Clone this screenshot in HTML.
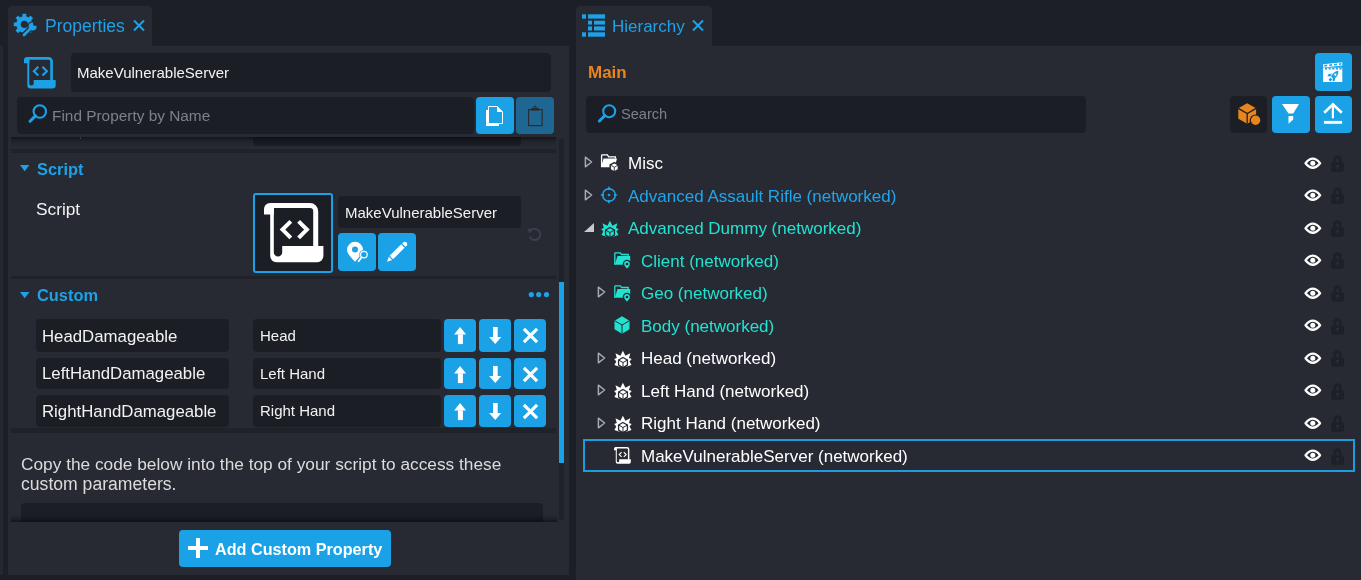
<!DOCTYPE html>
<html><head><meta charset="utf-8">
<style>
*{margin:0;padding:0;box-sizing:border-box}
html,body{width:1361px;height:580px;overflow:hidden;background:#1c1f26;font-family:"Liberation Sans",sans-serif}
.a{position:absolute}
.t{position:absolute;white-space:nowrap;line-height:1;will-change:transform}
svg{overflow:visible}
</style></head><body>
<div class="a" style="left:0px;top:46px;width:3px;height:529px;background:#262830;"></div>
<div class="a" style="left:8px;top:6px;width:144px;height:41px;background:#272a33;border-radius:4px 4px 0 0;"></div>
<div class="a" style="left:8px;top:46px;width:561px;height:529px;background:#272a33;"></div>
<svg class="a" style="left:11px;top:11px" width="30" height="30" viewBox="0 0 30 30">
<g fill="#1ea1e6" transform="translate(13.35 13.35)">
 <circle r="8.2"/>
 <rect x="-1.9" y="-10.6" width="3.8" height="4" rx="0.6" transform="rotate(0)"/><rect x="-1.9" y="-10.6" width="3.8" height="4" rx="0.6" transform="rotate(45)"/><rect x="-1.9" y="-10.6" width="3.8" height="4" rx="0.6" transform="rotate(90)"/><rect x="-1.9" y="-10.6" width="3.8" height="4" rx="0.6" transform="rotate(135)"/><rect x="-1.9" y="-10.6" width="3.8" height="4" rx="0.6" transform="rotate(180)"/><rect x="-1.9" y="-10.6" width="3.8" height="4" rx="0.6" transform="rotate(225)"/><rect x="-1.9" y="-10.6" width="3.8" height="4" rx="0.6" transform="rotate(270)"/><rect x="-1.9" y="-10.6" width="3.8" height="4" rx="0.6" transform="rotate(315)"/>
</g>
<circle cx="13.35" cy="13.35" r="3.6" fill="#272a33"/>
<path d="M13 24L20.5 16.5" stroke="#272a33" stroke-width="5.4" stroke-linecap="round"/>
<circle cx="21.6" cy="15.4" r="5.3" fill="#272a33"/>
<path d="M13 24L20.5 16.5" stroke="#1ea1e6" stroke-width="2.8" stroke-linecap="round"/>
<circle cx="21.6" cy="15.4" r="4" fill="#1ea1e6"/>
<circle cx="24.5" cy="12.5" r="2.5" fill="#272a33"/>
</svg>
<div class="t" style="left:45px;top:18px;font-size:17.5px;color:#1ea1e6;">Properties</div>
<svg class="a" style="left:133px;top:20px" width="12" height="11" viewBox="0 0 12 11"><path d="M1 0.5L11 10.5M11 0.5L1 10.5" stroke="#1ea1e6" stroke-width="2"/></svg>
<div class="a" style="left:11px;top:137px;width:546px;height:385px;overflow:hidden">
<div class="a" style="left:-11px;top:-137px;width:1361px;height:580px">
<div class="a" style="left:253px;top:110px;width:268px;height:36px;background:#1c1e26;border-radius:4px;"></div>
<div class="a" style="left:80px;top:136px;width:1px;height:3px;background:#6a6d75;"></div>
<div class="a" style="left:11px;top:149px;width:545px;height:4px;background:#1f2229;"></div>
<svg class="a" style="left:19px;top:164px" width="12" height="8" viewBox="0 0 12 8"><path d="M1 1H10.4L5.7 7.3Z" fill="#1ea1e6"/></svg>
<div class="t" style="left:37px;top:161px;font-size:16.4px;color:#1ea1e6;font-weight:bold;">Script</div>
<div class="t" style="left:36px;top:201px;font-size:17.3px;color:#f2f2f2;">Script</div>
<div class="a" style="left:253px;top:193px;width:80px;height:80px;background:#1c1e26;border-radius:3px;border:2px solid #1aa1e6;"></div>
<svg class="a" style="left:263.8px;top:203.4px;color:#ffffff" width="60" height="60" viewBox="0 0 60 60"><path d="M0 6A6 6 0 0 1 6 0H10V11.5H0Z" fill="currentColor"/>
 <path d="M6 2.5H46A5.7 5.7 0 0 1 51.7 8.2V44" fill="none" stroke="currentColor" stroke-width="5"/>
 <path d="M6.2 4V53A6.2 6.2 0 0 0 12.4 59.2H53.2A6.2 6.2 0 0 0 59.4 53V43H18.2V49.4A4.2 4.2 0 0 1 9.8 49.4V4Z" fill="currentColor"/>
 <path d="M26.8 18.3L18.5 26.6L26.8 34.9M34.6 18.3L42.9 26.6L34.6 34.9" fill="none" stroke="currentColor" stroke-width="4"/></svg>
<div class="a" style="left:338px;top:196px;width:183px;height:32px;background:#1c1e26;border-radius:4px;"></div>
<div class="t" style="left:344.5px;top:204.5px;font-size:15px;color:#f2f2f2;">MakeVulnerableServer</div>
<div class="a" style="left:338px;top:233px;width:38px;height:38px;background:#1aa1e6;border-radius:4px;"></div>
<svg class="a" style="left:338px;top:233px" width="38" height="38" viewBox="0 0 38 38">
<path d="M17 28.8C13.2 24.2 9 20.8 9 16.8A8 8 0 0 1 25 16.8C25 20.8 20.8 24.2 17 28.8Z" fill="#fff"/>
<circle cx="17" cy="16.6" r="3" fill="#1aa1e6"/>
<circle cx="25.9" cy="21.6" r="4.6" fill="#1aa1e6"/>
<path d="M23.6 24.2L20.6 28.3" stroke="#1aa1e6" stroke-width="3.6" stroke-linecap="round"/>
<circle cx="25.9" cy="21.6" r="3.3" fill="none" stroke="#fff" stroke-width="1.2"/>
<path d="M23.6 24.2L20.6 28.3" stroke="#fff" stroke-width="1.9" stroke-linecap="round"/>
</svg>
<div class="a" style="left:378px;top:233px;width:38px;height:38px;background:#1aa1e6;border-radius:4px;"></div>
<svg class="a" style="left:378px;top:233px" width="38" height="38" viewBox="0 0 38 38">
<path d="M9.1 28.8L14.19 27.1L10.8 23.71Z" fill="#fff"/>
<path d="M15.04 26.25L26.57 14.73L23.17 11.33L11.65 22.86Z" fill="#fff"/>
<path d="M27.48 13.81L28.9 12.4Q29.8 10.9 28.6 9.6Q27.3 8.4 25.7 9.1L24.09 10.42Z" fill="#fff"/>
</svg>
<svg class="a" style="left:527px;top:227px" width="16" height="14" viewBox="0 0 16 14">
<path d="M3.2 4.2A5.6 5.6 0 1 1 2.6 9.6" fill="none" stroke="#3c404b" stroke-width="1.9"/>
<path d="M0.8 1.2L6.2 2.2L2 6.6Z" fill="#3c404b"/>
</svg>
<div class="a" style="left:11px;top:276px;width:545px;height:3px;background:#1f2229;"></div>
<svg class="a" style="left:19px;top:291px" width="12" height="8" viewBox="0 0 12 8"><path d="M1 1H10.4L5.7 7.3Z" fill="#1ea1e6"/></svg>
<div class="t" style="left:37px;top:287px;font-size:16.4px;color:#1ea1e6;font-weight:bold;">Custom</div>
<svg class="a" style="left:527px;top:290px" width="24" height="10" viewBox="0 0 24 10"><circle cx="4.3" cy="4.6" r="2.6" fill="#1ea1e6"/><circle cx="11.7" cy="4.6" r="2.6" fill="#1ea1e6"/><circle cx="19.5" cy="4.6" r="2.6" fill="#1ea1e6"/></svg>
<div class="a" style="left:36px;top:319px;width:193px;height:32.5px;background:#1c1e26;border-radius:4px;"></div>
<div class="t" style="left:42px;top:329.2px;font-size:16.8px;color:#f2f2f2;">HeadDamageable</div>
<div class="a" style="left:253px;top:319px;width:188px;height:32.5px;background:#1c1e26;border-radius:4px;"></div>
<div class="t" style="left:260px;top:328.2px;font-size:15px;color:#f2f2f2;">Head</div>
<div class="a" style="left:444px;top:319px;width:32px;height:32.5px;background:#1aa1e6;border-radius:4px;"></div>
<svg class="a" style="left:444px;top:319px" width="32" height="33" viewBox="0 0 32 33"><path d="M16.1 8.1L22.1 15.5H10.1Z" fill="#fff"/><path d="M13.9 15.3H18.9V25.1H13.9Z" fill="#fff"/></svg>
<div class="a" style="left:479px;top:319px;width:32px;height:32.5px;background:#1aa1e6;border-radius:4px;"></div>
<svg class="a" style="left:479px;top:319px" width="32" height="33" viewBox="0 0 32 33"><path d="M14 8H18.7V18.3H14Z" fill="#fff"/><path d="M10.1 18.1H22.3L16.3 24.9Z" fill="#fff"/></svg>
<div class="a" style="left:514px;top:319px;width:32px;height:32.5px;background:#1aa1e6;border-radius:4px;"></div>
<svg class="a" style="left:514px;top:319px" width="32" height="33" viewBox="0 0 32 33"><path d="M9.9 9.9L23.1 23.1M23.1 9.9L9.9 23.1" stroke="#fff" stroke-width="3.2"/></svg>
<div class="a" style="left:36px;top:357.5px;width:193px;height:31.3px;background:#1c1e26;border-radius:4px;"></div>
<div class="t" style="left:42px;top:366.2px;font-size:16.8px;color:#f2f2f2;">LeftHandDamageable</div>
<div class="a" style="left:253px;top:357.5px;width:188px;height:31.3px;background:#1c1e26;border-radius:4px;"></div>
<div class="t" style="left:260px;top:365.5px;font-size:15px;color:#f2f2f2;">Left Hand</div>
<div class="a" style="left:444px;top:357.5px;width:32px;height:31.3px;background:#1aa1e6;border-radius:4px;"></div>
<svg class="a" style="left:444px;top:357.5px" width="32" height="33" viewBox="0 0 32 33"><path d="M16.1 8.1L22.1 15.5H10.1Z" fill="#fff"/><path d="M13.9 15.3H18.9V25.1H13.9Z" fill="#fff"/></svg>
<div class="a" style="left:479px;top:357.5px;width:32px;height:31.3px;background:#1aa1e6;border-radius:4px;"></div>
<svg class="a" style="left:479px;top:357.5px" width="32" height="33" viewBox="0 0 32 33"><path d="M14 8H18.7V18.3H14Z" fill="#fff"/><path d="M10.1 18.1H22.3L16.3 24.9Z" fill="#fff"/></svg>
<div class="a" style="left:514px;top:357.5px;width:32px;height:31.3px;background:#1aa1e6;border-radius:4px;"></div>
<svg class="a" style="left:514px;top:357.5px" width="32" height="33" viewBox="0 0 32 33"><path d="M9.9 9.9L23.1 23.1M23.1 9.9L9.9 23.1" stroke="#fff" stroke-width="3.2"/></svg>
<div class="a" style="left:36px;top:394.5px;width:193px;height:32px;background:#1c1e26;border-radius:4px;"></div>
<div class="t" style="left:42px;top:404.2px;font-size:16.8px;color:#f2f2f2;">RightHandDamageable</div>
<div class="a" style="left:253px;top:394.5px;width:188px;height:32px;background:#1c1e26;border-radius:4px;"></div>
<div class="t" style="left:260px;top:403px;font-size:15px;color:#f2f2f2;">Right Hand</div>
<div class="a" style="left:444px;top:394.5px;width:32px;height:32px;background:#1aa1e6;border-radius:4px;"></div>
<svg class="a" style="left:444px;top:394.5px" width="32" height="33" viewBox="0 0 32 33"><path d="M16.1 8.1L22.1 15.5H10.1Z" fill="#fff"/><path d="M13.9 15.3H18.9V25.1H13.9Z" fill="#fff"/></svg>
<div class="a" style="left:479px;top:394.5px;width:32px;height:32px;background:#1aa1e6;border-radius:4px;"></div>
<svg class="a" style="left:479px;top:394.5px" width="32" height="33" viewBox="0 0 32 33"><path d="M14 8H18.7V18.3H14Z" fill="#fff"/><path d="M10.1 18.1H22.3L16.3 24.9Z" fill="#fff"/></svg>
<div class="a" style="left:514px;top:394.5px;width:32px;height:32px;background:#1aa1e6;border-radius:4px;"></div>
<svg class="a" style="left:514px;top:394.5px" width="32" height="33" viewBox="0 0 32 33"><path d="M9.9 9.9L23.1 23.1M23.1 9.9L9.9 23.1" stroke="#fff" stroke-width="3.2"/></svg>
<div class="a" style="left:11px;top:428px;width:545px;height:5px;background:#1f2229;"></div>
<div class="t" style="left:21px;top:456px;font-size:17.3px;color:#dcdcdc;">Copy the code below into the top of your script to access these</div>
<div class="t" style="left:21px;top:476px;font-size:17.6px;color:#dcdcdc;">custom parameters.</div>
<div class="a" style="left:21px;top:503px;width:522px;height:60px;background:#1c1e26;border-radius:4px;"></div>
</div>
<div class="a" style="left:0;top:377px;width:546px;height:8px;background:linear-gradient(to bottom,rgba(0,0,0,0),rgba(0,0,0,.2) 60%,rgba(0,0,0,.5))"></div>
</div>
<div class="a" style="left:8px;top:46px;width:548px;height:91px;background:#272a33;"></div>
<div class="a" style="left:11px;top:137px;width:545px;height:10px;background:linear-gradient(to bottom,rgba(0,0,0,.5),rgba(0,0,0,.18) 40%,rgba(0,0,0,0))"></div>
<svg class="a" style="left:24px;top:56.6px;color:#1aa1e6" width="32" height="32" viewBox="0 0 60 60"><path d="M0 6A6 6 0 0 1 6 0H10V11.5H0Z" fill="currentColor"/>
 <path d="M6 2.5H46A5.7 5.7 0 0 1 51.7 8.2V44" fill="none" stroke="currentColor" stroke-width="5"/>
 <path d="M6.2 4V53A6.2 6.2 0 0 0 12.4 59.2H53.2A6.2 6.2 0 0 0 59.4 53V43H18.2V49.4A4.2 4.2 0 0 1 9.8 49.4V4Z" fill="currentColor"/>
 <path d="M26.8 18.3L18.5 26.6L26.8 34.9M34.6 18.3L42.9 26.6L34.6 34.9" fill="none" stroke="currentColor" stroke-width="4"/></svg>
<div class="a" style="left:71px;top:53px;width:480px;height:39px;background:#1c1e26;border-radius:4px;"></div>
<div class="t" style="left:77px;top:65px;font-size:15px;color:#f2f2f2;">MakeVulnerableServer</div>
<div class="a" style="left:17px;top:97px;width:457px;height:37px;background:#1c1e26;border-radius:4px;"></div>
<svg class="a" style="left:27px;top:103px" width="22" height="22" viewBox="0 0 22 22"><circle cx="12.8" cy="8.5" r="6.2" fill="none" stroke="#1aa1e6" stroke-width="2.1"/><path d="M8.4 12.9L3 18.3" stroke="#1aa1e6" stroke-width="3" stroke-linecap="round"/></svg>
<div class="t" style="left:52px;top:108px;font-size:15.4px;color:#7d8089;">Find Property by Name</div>
<div class="a" style="left:476px;top:97px;width:38px;height:37px;background:#1aa1e6;border-radius:4px;"></div>
<svg class="a" style="left:476px;top:97px" width="38" height="37" viewBox="0 0 38 37">
<rect x="10" y="13" width="13" height="16" fill="#fff"/>
<path d="M12.5 9.5H21.2L26.5 14.8V26.5H12.5Z" fill="#1aa1e6" stroke="#fff" stroke-width="1"/>
<path d="M21 9.3V15H26.7Z" fill="#fff"/>
</svg>
<div class="a" style="left:516px;top:97px;width:38px;height:37px;background:#1e6792;border-radius:4px;"></div>
<svg class="a" style="left:516px;top:97px" width="38" height="37" viewBox="0 0 38 37">
<rect x="12.6" y="12.6" width="13.5" height="16" fill="none" stroke="#2a2c31" stroke-width="1.2"/>
<rect x="15.2" y="11" width="7.7" height="2.6" fill="#2a2c31"/>
<circle cx="19" cy="10.2" r="1.2" fill="none" stroke="#2a2c31" stroke-width="1"/>
</svg>
<div class="a" style="left:559px;top:139px;width:5px;height:381px;background:#1f2229;"></div>
<div class="a" style="left:559px;top:282px;width:5px;height:181px;background:#1aa1e6;"></div>
<div class="a" style="left:179px;top:530px;width:212px;height:37px;background:#1aa1e6;border-radius:4px;"></div>
<div class="a" style="left:188.3px;top:546px;width:19.3px;height:4px;background:#fff;"></div>
<div class="a" style="left:196px;top:538px;width:4px;height:20px;background:#fff;"></div>
<div class="t" style="left:215px;top:541px;font-size:16.2px;color:#ffffff;font-weight:bold;">Add Custom Property</div>
<div class="a" style="left:576px;top:6px;width:136px;height:41px;background:#272a33;border-radius:4px 4px 0 0;"></div>
<div class="a" style="left:576px;top:46px;width:785px;height:534px;background:#272a33;"></div>
<svg class="a" style="left:582px;top:14px" width="24" height="23" viewBox="0 0 24 23"><g fill="#1ea1e6">
<rect x="0" y="0.3" width="4" height="4.3"/><rect x="6" y="0.3" width="17" height="4.3"/>
<rect x="6" y="6.7" width="4" height="3.9"/><rect x="12" y="6.7" width="11" height="3.9"/>
<rect x="6" y="12.4" width="4" height="4.1"/><rect x="12" y="12.4" width="11" height="4.1"/>
<rect x="0" y="18.3" width="4" height="4.4"/><rect x="6" y="18.3" width="17" height="4.4"/>
</g></svg>
<div class="t" style="left:612px;top:18px;font-size:17px;color:#1ea1e6;">Hierarchy</div>
<svg class="a" style="left:692px;top:20px" width="12" height="11" viewBox="0 0 12 11"><path d="M1 0.5L11 10.5M11 0.5L1 10.5" stroke="#1ea1e6" stroke-width="2"/></svg>
<div class="t" style="left:588px;top:63.8px;font-size:17px;color:#e8851c;font-weight:bold;">Main</div>
<div class="a" style="left:1315px;top:53px;width:37px;height:38px;background:#1aa1e6;border-radius:4px;"></div>
<svg class="a" style="left:1315px;top:53px" width="37" height="38" viewBox="0 0 37 38">
<path d="M8.1 11.2L27.3 9.2V12.6L8.1 14.6Z" fill="#fff"/>
<path d="M9.3 11.9L12.2 11.6V13.2L9.3 13.5Z M14.2 11.4L17.1 11.1V12.7L14.2 13Z M19.1 10.9L22 10.6V12.2L19.1 12.5Z M24 10.4L26.3 10.1V11.7L24 12Z" fill="#1aa1e6"/>
<path d="M8.1 14.7H27.3V29H8.1Z" fill="#fff"/>
<path d="M10 14.7H12.1V16.5H10Z M13.6 14.7H15.7V16.5H13.6Z M17.2 14.7H19.4V16.5H17.2Z M20.8 14.7H23V16.5H20.8Z M24.4 14.7H26.6V16.5H24.4Z" fill="#1aa1e6"/>
<path d="M23.2 17.8C20.2 18.2 17.6 20.3 16 23.4L18.6 26C21.7 24.4 23.7 21.8 23.2 17.8Z" fill="#1aa1e6"/>
<circle cx="20.3" cy="21.7" r="1.15" fill="#fff"/>
<path d="M16.9 20.6L13.3 21.3L12.4 23.2L15.4 23.4Z M20.4 24.1L19.7 27.7L17.8 28.6L17.6 25.6Z" fill="#1aa1e6"/>
<path d="M15.3 24.6L17.4 26.7L15.2 28.4L13.6 26.8Z" fill="#1aa1e6"/>
</svg>
<div class="a" style="left:586px;top:96px;width:500px;height:37px;background:#1c1e26;border-radius:4px;"></div>
<svg class="a" style="left:596px;top:103px" width="22" height="22" viewBox="0 0 22 22"><circle cx="13.2" cy="8.2" r="6" fill="none" stroke="#1aa1e6" stroke-width="2.1"/><path d="M8.8 12.6L3.4 18" stroke="#1aa1e6" stroke-width="3" stroke-linecap="round"/></svg>
<div class="t" style="left:620.8px;top:106.5px;font-size:14.6px;color:#7d8089;">Search</div>
<div class="a" style="left:1230px;top:96px;width:37px;height:37px;background:#1c1e26;border-radius:4px;"></div>
<svg class="a" style="left:1230px;top:96px" width="37" height="37" viewBox="0 0 37 37">
<path d="M17.2 7.2L26.1 12.35V22.65L17.2 27.8L8.3 22.65V12.35Z" fill="#e8851c"/>
<path d="M8.3 12.35L17.2 17.5L26.1 12.35M17.2 17.5V27.8" fill="none" stroke="#1c1e26" stroke-width="1.3"/>
<circle cx="25.6" cy="24.3" r="5.9" fill="#1c1e26"/>
<circle cx="25.6" cy="24.3" r="4.7" fill="#e8851c"/>
</svg>
<div class="a" style="left:1272px;top:96px;width:38px;height:37px;background:#1aa1e6;border-radius:4px;"></div>
<svg class="a" style="left:1272px;top:96px" width="38" height="37" viewBox="0 0 38 37"><path d="M10 8.1H27L21.2 17.6H16.5Z" fill="#fff"/><path d="M16.5 20.1H21.2V23.5L16.5 27.7Z" fill="#fff"/></svg>
<div class="a" style="left:1315px;top:96px;width:37px;height:37px;background:#1aa1e6;border-radius:4px;"></div>
<svg class="a" style="left:1315px;top:96px" width="37" height="37" viewBox="0 0 37 37"><path d="M9.2 16.8L17.9 8.3L26.8 16.8" fill="none" stroke="#fff" stroke-width="2.6"/><path d="M17.9 9V22.3" stroke="#fff" stroke-width="2.2"/><rect x="8.9" y="24.9" width="18.2" height="2.9" fill="#fff"/></svg>
<div class="a" style="left:583px;top:439px;width:772px;height:33px;background:transparent;border:2px solid #1b9ddf;"></div>
<svg class="a" style="left:584.3px;top:156.2px;color:" width="9" height="12" viewBox="0 0 9 12"><path d="M1.4 1.2V10.8L7.6 6Z" fill="none" stroke="#a9a9ab" stroke-width="1.5" stroke-linejoin="round"/></svg>
<svg class="a" style="left:599.8px;top:153.7px;color:#ffffff" width="18" height="18" viewBox="0 0 18 18"><path d="M1.6 13V1.6Q1.6 0.9 2.3 0.9H7.4L8.7 2.9H15.4V4.6" fill="none" stroke="currentColor" stroke-width="1.3"/>
 <path d="M3.6 4.6H17L14.5 13.2H1Z" fill="currentColor"/>
 <path d="M14.3 8.6L18.4 10.95V15.65L14.3 18L10.2 15.65V10.95Z" fill="currentColor" stroke="#272a33" stroke-width="1.5" stroke-linejoin="round"/>
 <path d="M10.2 10.95L14.3 13.3L18.4 10.95M14.3 13.3V18" fill="none" stroke="#272a33" stroke-width="0.9"/></svg>
<div class="t" style="left:628.2px;top:155.0px;font-size:17px;color:#ffffff;">Misc</div>
<svg class="a" style="left:1303.5px;top:156.5px;color:" width="18" height="13" viewBox="0 0 18 13"><path d="M1.5 6.2Q8.8 -2.9 16.1 6.2Q8.8 15.3 1.5 6.2Z" fill="none" stroke="#fff" stroke-width="2.3" stroke-linejoin="round"/>
 <circle cx="8.8" cy="6.2" r="2.5" fill="#fff"/></svg>
<svg class="a" style="left:1331px;top:154.8px;color:" width="13" height="17" viewBox="0 0 13 17"><path d="M3.8 7.5V4.4A2.7 2.7 0 0 1 9.2 4.4V7.5" fill="none" stroke="#1d2027" stroke-width="2.9"/>
 <rect x="0.2" y="7.2" width="12.7" height="9.6" rx="2" fill="#1d2027"/>
 <circle cx="6.5" cy="11" r="1.3" fill="#2b2e37"/><rect x="6" y="11" width="1" height="3.2" fill="#2b2e37"/></svg>
<svg class="a" style="left:584.3px;top:188.75px;color:" width="9" height="12" viewBox="0 0 9 12"><path d="M1.4 1.2V10.8L7.6 6Z" fill="none" stroke="#a9a9ab" stroke-width="1.5" stroke-linejoin="round"/></svg>
<svg class="a" style="left:600.0999999999999px;top:186.25px" width="18" height="18" viewBox="0 0 18 18"><circle cx="9" cy="9" r="6.3" stroke="#1ea6ec" fill="none" stroke-width="1.45"/>
<g fill="#1ea6ec"><path d="M9 0.1L10.6 3.3L9 4.2L7.4 3.3Z" transform="rotate(0 9 9)"/><path d="M9 0.1L10.6 3.3L9 4.2L7.4 3.3Z" transform="rotate(90 9 9)"/><path d="M9 0.1L10.6 3.3L9 4.2L7.4 3.3Z" transform="rotate(180 9 9)"/><path d="M9 0.1L10.6 3.3L9 4.2L7.4 3.3Z" transform="rotate(270 9 9)"/><path d="M9 7.4L10.6 9L9 10.6L7.4 9Z"/></g></svg>
<div class="t" style="left:628.2px;top:187.55px;font-size:17px;color:#1ea6ec;">Advanced Assault Rifle (networked)</div>
<svg class="a" style="left:1303.5px;top:189.05px;color:" width="18" height="13" viewBox="0 0 18 13"><path d="M1.5 6.2Q8.8 -2.9 16.1 6.2Q8.8 15.3 1.5 6.2Z" fill="none" stroke="#fff" stroke-width="2.3" stroke-linejoin="round"/>
 <circle cx="8.8" cy="6.2" r="2.5" fill="#fff"/></svg>
<svg class="a" style="left:1331px;top:187.35px;color:" width="13" height="17" viewBox="0 0 13 17"><path d="M3.8 7.5V4.4A2.7 2.7 0 0 1 9.2 4.4V7.5" fill="none" stroke="#1d2027" stroke-width="2.9"/>
 <rect x="0.2" y="7.2" width="12.7" height="9.6" rx="2" fill="#1d2027"/>
 <circle cx="6.5" cy="11" r="1.3" fill="#2b2e37"/><rect x="6" y="11" width="1" height="3.2" fill="#2b2e37"/></svg>
<svg class="a" style="left:584px;top:222.8px" width="10" height="9" viewBox="0 0 10 9"><path d="M10 0V9H0Z" fill="#c9c9cb"/></svg>
<svg class="a" style="left:600.5px;top:219.5px;color:#22e2d0" width="18" height="18" viewBox="0 0 18 18"><path d="M8.9 0.7L11.4 5.7L16.3 3.2L15 8L17.7 8.9L15.5 11.5L17.5 15.1L13 16.5H4.8L0.4 15.1L2.3 11.5L0.2 8.9L2.8 8L1.5 3.2L6.4 5.7Z" fill="currentColor"/>
 <path d="M9 7.45L13.42 10L13.42 15.1L9 17.65L4.58 15.1L4.58 10Z" fill="currentColor" stroke="#272a33" stroke-width="1.3" stroke-linejoin="round"/>
 <path d="M4.58 10L9 12.55L13.42 10M9 12.55V17.65" fill="none" stroke="#272a33" stroke-width="1"/></svg>
<div class="t" style="left:628.2px;top:220.1px;font-size:17px;color:#22e2d0;">Advanced Dummy (networked)</div>
<svg class="a" style="left:1303.5px;top:221.6px;color:" width="18" height="13" viewBox="0 0 18 13"><path d="M1.5 6.2Q8.8 -2.9 16.1 6.2Q8.8 15.3 1.5 6.2Z" fill="none" stroke="#fff" stroke-width="2.3" stroke-linejoin="round"/>
 <circle cx="8.8" cy="6.2" r="2.5" fill="#fff"/></svg>
<svg class="a" style="left:1331px;top:219.9px;color:" width="13" height="17" viewBox="0 0 13 17"><path d="M3.8 7.5V4.4A2.7 2.7 0 0 1 9.2 4.4V7.5" fill="none" stroke="#1d2027" stroke-width="2.9"/>
 <rect x="0.2" y="7.2" width="12.7" height="9.6" rx="2" fill="#1d2027"/>
 <circle cx="6.5" cy="11" r="1.3" fill="#2b2e37"/><rect x="6" y="11" width="1" height="3.2" fill="#2b2e37"/></svg>
<svg class="a" style="left:612.8px;top:251.35px;color:#22e2d0" width="18" height="18" viewBox="0 0 18 18"><path d="M1.8 13.8V2.6Q1.8 1.9 2.5 1.9H7.3L8.6 3.5H15.2V5" fill="none" stroke="currentColor" stroke-width="1.3"/>
 <path d="M4.5 5H17.2V13.8H1.8Z" fill="currentColor"/>
 <path d="M14 18.6C12.4 16.7 10.4 15.2 10.4 13A3.6 3.6 0 0 1 17.6 13C17.6 15.2 15.6 16.7 14 18.6Z" fill="currentColor" stroke="#272a33" stroke-width="1.4"/>
 <circle cx="14" cy="13" r="1.35" fill="#272a33"/></svg>
<div class="t" style="left:640.7px;top:252.65px;font-size:17px;color:#22e2d0;">Client (networked)</div>
<svg class="a" style="left:1303.5px;top:254.15px;color:" width="18" height="13" viewBox="0 0 18 13"><path d="M1.5 6.2Q8.8 -2.9 16.1 6.2Q8.8 15.3 1.5 6.2Z" fill="none" stroke="#fff" stroke-width="2.3" stroke-linejoin="round"/>
 <circle cx="8.8" cy="6.2" r="2.5" fill="#fff"/></svg>
<svg class="a" style="left:1331px;top:252.45px;color:" width="13" height="17" viewBox="0 0 13 17"><path d="M3.8 7.5V4.4A2.7 2.7 0 0 1 9.2 4.4V7.5" fill="none" stroke="#1d2027" stroke-width="2.9"/>
 <rect x="0.2" y="7.2" width="12.7" height="9.6" rx="2" fill="#1d2027"/>
 <circle cx="6.5" cy="11" r="1.3" fill="#2b2e37"/><rect x="6" y="11" width="1" height="3.2" fill="#2b2e37"/></svg>
<svg class="a" style="left:597.3px;top:286.4px;color:" width="9" height="12" viewBox="0 0 9 12"><path d="M1.4 1.2V10.8L7.6 6Z" fill="none" stroke="#a9a9ab" stroke-width="1.5" stroke-linejoin="round"/></svg>
<svg class="a" style="left:612.8px;top:283.9px;color:#22e2d0" width="18" height="18" viewBox="0 0 18 18"><path d="M1.8 13.8V2.6Q1.8 1.9 2.5 1.9H7.3L8.6 3.5H15.2V5" fill="none" stroke="currentColor" stroke-width="1.3"/>
 <path d="M4.5 5H17.2V13.8H1.8Z" fill="currentColor"/>
 <path d="M14 18.6C12.4 16.7 10.4 15.2 10.4 13A3.6 3.6 0 0 1 17.6 13C17.6 15.2 15.6 16.7 14 18.6Z" fill="currentColor" stroke="#272a33" stroke-width="1.4"/>
 <circle cx="14" cy="13" r="1.35" fill="#272a33"/></svg>
<div class="t" style="left:640.7px;top:285.2px;font-size:17px;color:#22e2d0;">Geo (networked)</div>
<svg class="a" style="left:1303.5px;top:286.7px;color:" width="18" height="13" viewBox="0 0 18 13"><path d="M1.5 6.2Q8.8 -2.9 16.1 6.2Q8.8 15.3 1.5 6.2Z" fill="none" stroke="#fff" stroke-width="2.3" stroke-linejoin="round"/>
 <circle cx="8.8" cy="6.2" r="2.5" fill="#fff"/></svg>
<svg class="a" style="left:1331px;top:285.0px;color:" width="13" height="17" viewBox="0 0 13 17"><path d="M3.8 7.5V4.4A2.7 2.7 0 0 1 9.2 4.4V7.5" fill="none" stroke="#1d2027" stroke-width="2.9"/>
 <rect x="0.2" y="7.2" width="12.7" height="9.6" rx="2" fill="#1d2027"/>
 <circle cx="6.5" cy="11" r="1.3" fill="#2b2e37"/><rect x="6" y="11" width="1" height="3.2" fill="#2b2e37"/></svg>
<svg class="a" style="left:612.8px;top:316.45px;color:#22e2d0" width="18" height="18" viewBox="0 0 18 18"><path d="M9 0.3L16.5 4.65V13.35L9 17.7L1.5 13.35V4.65Z" fill="currentColor"/>
 <path d="M1.5 4.65L9 9L16.5 4.65M9 9V17.7" fill="none" stroke="#272a33" stroke-width="1"/></svg>
<div class="t" style="left:640.7px;top:317.75px;font-size:17px;color:#22e2d0;">Body (networked)</div>
<svg class="a" style="left:1303.5px;top:319.25px;color:" width="18" height="13" viewBox="0 0 18 13"><path d="M1.5 6.2Q8.8 -2.9 16.1 6.2Q8.8 15.3 1.5 6.2Z" fill="none" stroke="#fff" stroke-width="2.3" stroke-linejoin="round"/>
 <circle cx="8.8" cy="6.2" r="2.5" fill="#fff"/></svg>
<svg class="a" style="left:1331px;top:317.55px;color:" width="13" height="17" viewBox="0 0 13 17"><path d="M3.8 7.5V4.4A2.7 2.7 0 0 1 9.2 4.4V7.5" fill="none" stroke="#1d2027" stroke-width="2.9"/>
 <rect x="0.2" y="7.2" width="12.7" height="9.6" rx="2" fill="#1d2027"/>
 <circle cx="6.5" cy="11" r="1.3" fill="#2b2e37"/><rect x="6" y="11" width="1" height="3.2" fill="#2b2e37"/></svg>
<svg class="a" style="left:597.3px;top:351.5px;color:" width="9" height="12" viewBox="0 0 9 12"><path d="M1.4 1.2V10.8L7.6 6Z" fill="none" stroke="#a9a9ab" stroke-width="1.5" stroke-linejoin="round"/></svg>
<svg class="a" style="left:613.5px;top:349.7px;color:#ffffff" width="18" height="18" viewBox="0 0 18 18"><path d="M8.9 0.7L11.4 5.7L16.3 3.2L15 8L17.7 8.9L15.5 11.5L17.5 15.1L13 16.5H4.8L0.4 15.1L2.3 11.5L0.2 8.9L2.8 8L1.5 3.2L6.4 5.7Z" fill="currentColor"/>
 <path d="M9 7.45L13.42 10L13.42 15.1L9 17.65L4.58 15.1L4.58 10Z" fill="currentColor" stroke="#272a33" stroke-width="1.3" stroke-linejoin="round"/>
 <path d="M4.58 10L9 12.55L13.42 10M9 12.55V17.65" fill="none" stroke="#272a33" stroke-width="1"/></svg>
<div class="t" style="left:640.7px;top:350.3px;font-size:17px;color:#ffffff;">Head (networked)</div>
<svg class="a" style="left:1303.5px;top:351.8px;color:" width="18" height="13" viewBox="0 0 18 13"><path d="M1.5 6.2Q8.8 -2.9 16.1 6.2Q8.8 15.3 1.5 6.2Z" fill="none" stroke="#fff" stroke-width="2.3" stroke-linejoin="round"/>
 <circle cx="8.8" cy="6.2" r="2.5" fill="#fff"/></svg>
<svg class="a" style="left:1331px;top:350.1px;color:" width="13" height="17" viewBox="0 0 13 17"><path d="M3.8 7.5V4.4A2.7 2.7 0 0 1 9.2 4.4V7.5" fill="none" stroke="#1d2027" stroke-width="2.9"/>
 <rect x="0.2" y="7.2" width="12.7" height="9.6" rx="2" fill="#1d2027"/>
 <circle cx="6.5" cy="11" r="1.3" fill="#2b2e37"/><rect x="6" y="11" width="1" height="3.2" fill="#2b2e37"/></svg>
<svg class="a" style="left:597.3px;top:384.05px;color:" width="9" height="12" viewBox="0 0 9 12"><path d="M1.4 1.2V10.8L7.6 6Z" fill="none" stroke="#a9a9ab" stroke-width="1.5" stroke-linejoin="round"/></svg>
<svg class="a" style="left:613.5px;top:382.25px;color:#ffffff" width="18" height="18" viewBox="0 0 18 18"><path d="M8.9 0.7L11.4 5.7L16.3 3.2L15 8L17.7 8.9L15.5 11.5L17.5 15.1L13 16.5H4.8L0.4 15.1L2.3 11.5L0.2 8.9L2.8 8L1.5 3.2L6.4 5.7Z" fill="currentColor"/>
 <path d="M9 7.45L13.42 10L13.42 15.1L9 17.65L4.58 15.1L4.58 10Z" fill="currentColor" stroke="#272a33" stroke-width="1.3" stroke-linejoin="round"/>
 <path d="M4.58 10L9 12.55L13.42 10M9 12.55V17.65" fill="none" stroke="#272a33" stroke-width="1"/></svg>
<div class="t" style="left:640.7px;top:382.85px;font-size:17px;color:#ffffff;">Left Hand (networked)</div>
<svg class="a" style="left:1303.5px;top:384.35px;color:" width="18" height="13" viewBox="0 0 18 13"><path d="M1.5 6.2Q8.8 -2.9 16.1 6.2Q8.8 15.3 1.5 6.2Z" fill="none" stroke="#fff" stroke-width="2.3" stroke-linejoin="round"/>
 <circle cx="8.8" cy="6.2" r="2.5" fill="#fff"/></svg>
<svg class="a" style="left:1331px;top:382.65px;color:" width="13" height="17" viewBox="0 0 13 17"><path d="M3.8 7.5V4.4A2.7 2.7 0 0 1 9.2 4.4V7.5" fill="none" stroke="#1d2027" stroke-width="2.9"/>
 <rect x="0.2" y="7.2" width="12.7" height="9.6" rx="2" fill="#1d2027"/>
 <circle cx="6.5" cy="11" r="1.3" fill="#2b2e37"/><rect x="6" y="11" width="1" height="3.2" fill="#2b2e37"/></svg>
<svg class="a" style="left:597.3px;top:416.6px;color:" width="9" height="12" viewBox="0 0 9 12"><path d="M1.4 1.2V10.8L7.6 6Z" fill="none" stroke="#a9a9ab" stroke-width="1.5" stroke-linejoin="round"/></svg>
<svg class="a" style="left:613.5px;top:414.8px;color:#ffffff" width="18" height="18" viewBox="0 0 18 18"><path d="M8.9 0.7L11.4 5.7L16.3 3.2L15 8L17.7 8.9L15.5 11.5L17.5 15.1L13 16.5H4.8L0.4 15.1L2.3 11.5L0.2 8.9L2.8 8L1.5 3.2L6.4 5.7Z" fill="currentColor"/>
 <path d="M9 7.45L13.42 10L13.42 15.1L9 17.65L4.58 15.1L4.58 10Z" fill="currentColor" stroke="#272a33" stroke-width="1.3" stroke-linejoin="round"/>
 <path d="M4.58 10L9 12.55L13.42 10M9 12.55V17.65" fill="none" stroke="#272a33" stroke-width="1"/></svg>
<div class="t" style="left:640.7px;top:415.4px;font-size:17px;color:#ffffff;">Right Hand (networked)</div>
<svg class="a" style="left:1303.5px;top:416.9px;color:" width="18" height="13" viewBox="0 0 18 13"><path d="M1.5 6.2Q8.8 -2.9 16.1 6.2Q8.8 15.3 1.5 6.2Z" fill="none" stroke="#fff" stroke-width="2.3" stroke-linejoin="round"/>
 <circle cx="8.8" cy="6.2" r="2.5" fill="#fff"/></svg>
<svg class="a" style="left:1331px;top:415.2px;color:" width="13" height="17" viewBox="0 0 13 17"><path d="M3.8 7.5V4.4A2.7 2.7 0 0 1 9.2 4.4V7.5" fill="none" stroke="#1d2027" stroke-width="2.9"/>
 <rect x="0.2" y="7.2" width="12.7" height="9.6" rx="2" fill="#1d2027"/>
 <circle cx="6.5" cy="11" r="1.3" fill="#2b2e37"/><rect x="6" y="11" width="1" height="3.2" fill="#2b2e37"/></svg>
<svg class="a" style="left:613.8px;top:447.15px;color:#ffffff" width="17" height="17" viewBox="0 0 60 60"><path d="M0 6A6 6 0 0 1 6 0H10V11.5H0Z" fill="currentColor"/>
 <path d="M6 2.5H46A5.7 5.7 0 0 1 51.7 8.2V44" fill="none" stroke="currentColor" stroke-width="5"/>
 <path d="M6.2 4V53A6.2 6.2 0 0 0 12.4 59.2H53.2A6.2 6.2 0 0 0 59.4 53V43H18.2V49.4A4.2 4.2 0 0 1 9.8 49.4V4Z" fill="currentColor"/>
 <path d="M26.8 18.3L18.5 26.6L26.8 34.9M34.6 18.3L42.9 26.6L34.6 34.9" fill="none" stroke="currentColor" stroke-width="4"/></svg>
<div class="t" style="left:640.7px;top:447.95px;font-size:17px;color:#ffffff;">MakeVulnerableServer (networked)</div>
<svg class="a" style="left:1303.5px;top:449.45px;color:" width="18" height="13" viewBox="0 0 18 13"><path d="M1.5 6.2Q8.8 -2.9 16.1 6.2Q8.8 15.3 1.5 6.2Z" fill="none" stroke="#fff" stroke-width="2.3" stroke-linejoin="round"/>
 <circle cx="8.8" cy="6.2" r="2.5" fill="#fff"/></svg>
<svg class="a" style="left:1331px;top:447.75px;color:" width="13" height="17" viewBox="0 0 13 17"><path d="M3.8 7.5V4.4A2.7 2.7 0 0 1 9.2 4.4V7.5" fill="none" stroke="#1d2027" stroke-width="2.9"/>
 <rect x="0.2" y="7.2" width="12.7" height="9.6" rx="2" fill="#1d2027"/>
 <circle cx="6.5" cy="11" r="1.3" fill="#2b2e37"/><rect x="6" y="11" width="1" height="3.2" fill="#2b2e37"/></svg>
</body></html>
